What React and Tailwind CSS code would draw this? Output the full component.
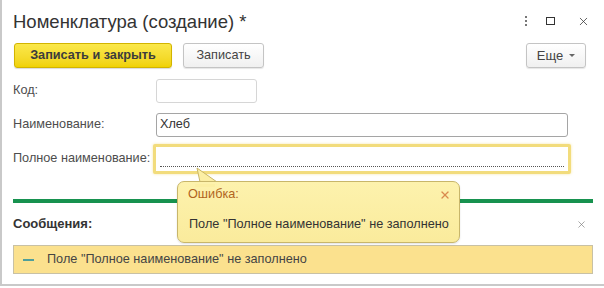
import React from 'react';
import { X } from 'lucide-react';

const font = { fontFamily: '"Liberation Sans", Arial, sans-serif' };

const Row = ({ label, children }) => (
  <div className="flex items-center h-6">
    <div className="w-[140px] shrink-0 whitespace-nowrap text-[12.7px] text-[#4d4d4d]">{label}</div>
    {children}
  </div>
);

export default function App() {
  return (
    <div
      style={font}
      className="relative w-[604px] h-[286px] bg-white border-l-2 border-b-2 border-[#c9c9c9] overflow-hidden"
    >
      {/* Title bar */}
      <div className="flex items-center h-[42px] pl-[11px] pr-[14px]">
        <h1 className="text-[18.5px] leading-none text-[#333] pt-[2px]">Номенклатура (создание) *</h1>
        <div className="ml-auto flex items-center gap-[18px] text-[#444]">
          <div className="flex flex-col gap-[2px] items-center w-[4px]">
            <span className="w-[2px] h-[2px] bg-[#777]" />
            <span className="w-[2px] h-[2px] bg-[#777]" />
            <span className="w-[2px] h-[2px] bg-[#777]" />
          </div>
          <span className="w-[9px] h-[8px] border border-[#333]" />
          <X size={13} strokeWidth={1.4} className="text-[#333] ml-[4px]" />
        </div>
      </div>

      {/* Command bar */}
      <div className="flex items-center h-[25px] mt-[1px] pl-[12px] pr-[18px]">
        <button className="h-[25px] w-[158px] rounded-[3px] border border-[#d2b400] bg-gradient-to-b from-[#fbe849] to-[#f0d200] text-[12.7px] font-bold text-[#3c3c3c] shadow-[0_1px_1px_rgba(0,0,0,0.15)]">
          Записать и закрыть
        </button>
        <button className="ml-[11px] h-[25px] w-[81px] rounded-[3px] border border-[#c4c4c4] bg-gradient-to-b from-white to-[#f0f0f0] text-[12.7px] text-[#444] shadow-[0_1px_1px_rgba(0,0,0,0.1)]">
          Записать
        </button>
        <button className="ml-auto h-[25px] w-[60px] rounded-[3px] border border-[#c4c4c4] bg-gradient-to-b from-white to-[#f0f0f0] text-[13px] text-[#444] shadow-[0_1px_1px_rgba(0,0,0,0.1)] flex items-center justify-center gap-[6px]">
          <span>Еще</span>
          <span className="w-0 h-0 border-l-[3px] border-r-[3px] border-t-[3px] border-l-transparent border-r-transparent border-t-[#666]" />
        </button>
      </div>

      {/* Form */}
      <div className="flex flex-col gap-[10px] mt-[11px] pl-[11px] pr-[36px]">
        <Row label="Код:">
          <div className="ml-[3px] w-[101px] h-6 rounded-[3px] border border-[#d6d6d6]" />
        </Row>
        <Row label="Наименование:">
          <div className="ml-[3px] flex-1 h-6 rounded-[3px] border border-[#a5a5a5] flex items-center px-[3px] text-[12.7px] text-[#333]">
            Хлеб
          </div>
        </Row>
        <Row label="Полное наименование:">
          <div className="flex-1 h-[30px] -mr-[3px] border-[3px] border-[#f2dc7c] rounded-[2px] bg-white shadow-[0_0_3px_rgba(240,215,110,0.6)]">
            <div className="mx-[4px] h-[20px] border-b border-dotted border-[#555]" />
          </div>
        </Row>
      </div>

      {/* Messages */}
      <div className="mt-[28px] mx-[11px] h-[4px] bg-[#17924f]" />
      <div className="flex items-center h-[42px] pl-[11px] pr-[17px]">
        <span className="text-[13px] font-bold text-[#333]">Сообщения:</span>
        <X size={11} strokeWidth={1.4} className="ml-auto text-[#777]" />
      </div>
      <div className="mx-[11px] h-[29px] border border-[#c8c1a5] bg-[#fbe18e] flex items-center text-[12.7px] text-[#444]">
        <span className="ml-[9px] w-[11px] h-[2px] bg-[#4f9f9b]" />
        <span className="ml-[13px]">Поле "Полное наименование" не заполнено</span>
      </div>

      {/* Error tooltip */}
      <svg className="absolute left-[192px] top-[167px]" width="26" height="16" viewBox="0 0 26 16">
        <path d="M3 1 L6 15 L23 15 Z" fill="#fcefa4" stroke="#c8b66a" strokeWidth="1" />
      </svg>
      <div className="absolute left-[175px] top-[181px] w-[283px] h-[62px] rounded-[7px] border border-[#c8b66a] bg-gradient-to-b from-[#fdf2ad] to-[#faeb9c] shadow-[0_1px_2px_rgba(0,0,0,0.12)]">
        <div className="absolute left-[17px] top-[2px] w-[20px] h-[3px] bg-[#fcefa4]" />
        <div className="flex items-center h-[26px] pl-[10px] pr-[8px]">
          <span className="text-[12.7px] text-[#b0641e]">Ошибка:</span>
          <X size={12} strokeWidth={2.6} className="ml-auto text-[#d98a4e]" />
        </div>
        <div className="pl-[11px] pt-[7px] text-[12.7px] text-[#333]">
          Поле "Полное наименование" не заполнено
        </div>
      </div>
    </div>
  );
}
